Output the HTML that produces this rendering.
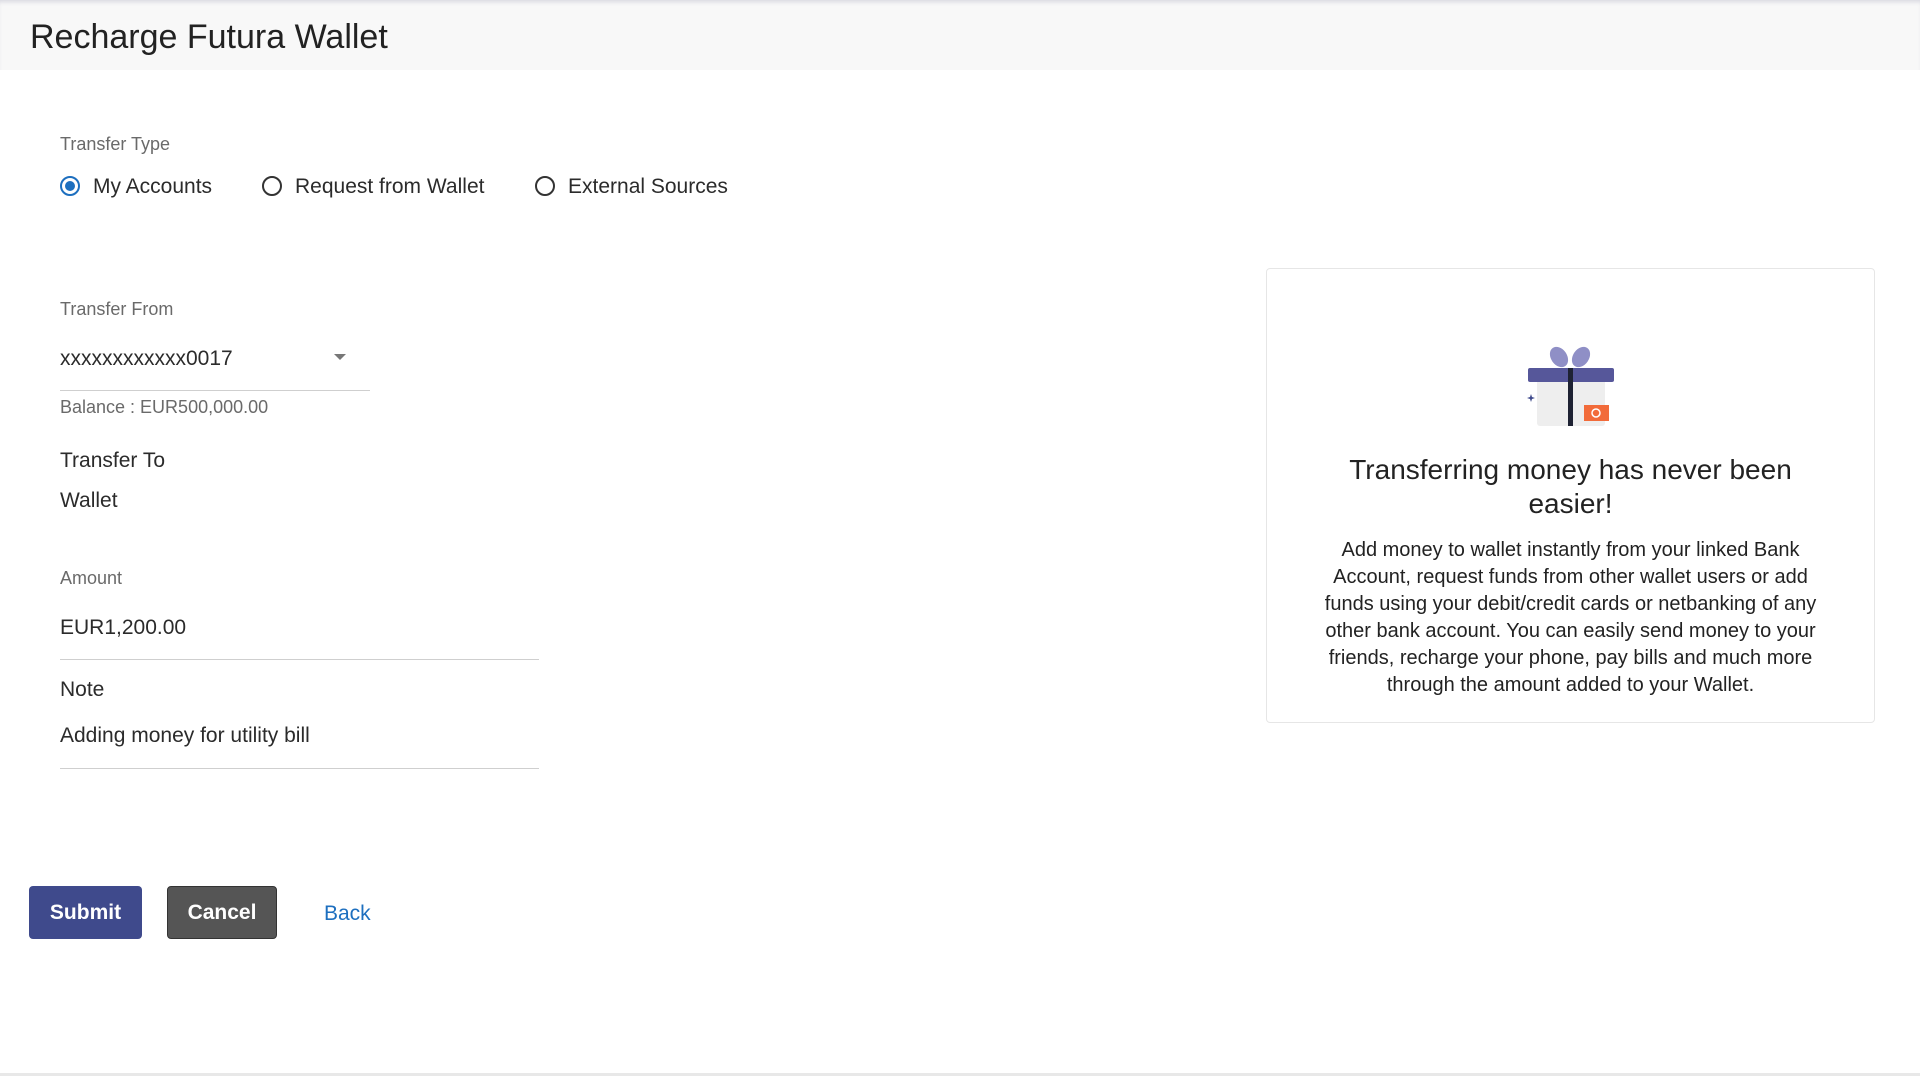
<!DOCTYPE html>
<html><head><style>
body{margin:0;width:1920px;height:1076px;background:#fff;font-family:"Liberation Sans",sans-serif;color:#2b2b2b;position:relative;overflow:hidden}
.a{position:absolute;white-space:nowrap}
.hdr{position:absolute;left:0;top:0;width:1920px;height:70px;background:#f8f8f8;box-shadow:inset 0 4px 4px -2px #d8d8e0}
.lbl{font-size:18px;color:#6a6a6a}
.val{font-size:21px;color:#2b2b2b}
.line{position:absolute;height:1px;background:#cfcfcf}
.rad{position:absolute;width:20px;height:20px;border:2px solid #333;border-radius:50%;box-sizing:border-box}
.btn{position:absolute;height:53px;border-radius:4px;color:#fff;font-size:21px;font-weight:bold;display:flex;align-items:center;justify-content:center}
</style></head><body>
<div class="hdr"></div>
<div class="a" style="left:30px;top:18px;font-size:34px;color:#222">Recharge Futura Wallet</div>
<div class="a lbl" style="left:60px;top:134px">Transfer Type</div>
<div class="rad" style="left:60px;top:176px;border-color:#1d6fbf"><div style="position:absolute;left:3px;top:3px;width:10px;height:10px;border-radius:50%;background:#1d6fbf"></div></div>
<div class="a val" style="left:93px;top:175px">My Accounts</div>
<div class="rad" style="left:262px;top:176px"></div>
<div class="a val" style="left:295px;top:175px">Request from Wallet</div>
<div class="rad" style="left:535px;top:176px"></div>
<div class="a val" style="left:568px;top:175px">External Sources</div>
<div class="a lbl" style="left:60px;top:299px">Transfer From</div>
<div class="a val" style="left:60px;top:347px">xxxxxxxxxxxx0017</div>
<div class="a" style="left:334px;top:354px;width:0;height:0;border-left:6px solid transparent;border-right:6px solid transparent;border-top:6px solid #777"></div>
<div class="line" style="left:60px;top:390px;width:310px"></div>
<div class="a lbl" style="left:60px;top:397px">Balance : EUR500,000.00</div>
<div class="a val" style="left:60px;top:449px">Transfer To</div>
<div class="a val" style="left:60px;top:489px">Wallet</div>
<div class="a lbl" style="left:60px;top:568px">Amount</div>
<div class="a val" style="left:60px;top:616px">EUR1,200.00</div>
<div class="line" style="left:60px;top:659px;width:479px"></div>
<div class="a val" style="left:60px;top:678px">Note</div>
<div class="a val" style="left:60px;top:724px">Adding money for utility bill</div>
<div class="line" style="left:60px;top:768px;width:479px"></div>
<div class="btn" style="left:29px;top:886px;width:113px;background:#3f4a8c">Submit</div>
<div class="btn" style="left:167px;top:886px;width:110px;background:#555;border:1px solid #333;box-sizing:border-box">Cancel</div>
<div class="a" style="left:324px;top:902px;font-size:21px;color:#1d6fbf">Back</div>
<div class="a" style="left:1266px;top:268px;width:607px;height:453px;border:1px solid #e6e6e6;border-radius:4px;white-space:normal">
<svg style="position:absolute;left:258px;top:74px" width="92" height="86" viewBox="0 0 92 86">
<ellipse cx="34" cy="14" rx="8" ry="11" fill="#8f8fc6" transform="rotate(-35 34 14)"/>
<ellipse cx="56" cy="14" rx="8" ry="11" fill="#8f8fc6" transform="rotate(35 56 14)"/>
<rect x="12" y="33" width="68" height="50" rx="3" fill="#eeeeee"/>
<rect x="3" y="25" width="86" height="14" rx="2" fill="#56579a"/>
<rect x="43" y="25" width="5" height="58" fill="#1e2233"/>
<rect x="59" y="62" width="25" height="16" fill="#f26b3a"/>
<circle cx="71" cy="70" r="4" fill="none" stroke="#fff" stroke-width="1.5"/>
<path d="M6 51l1 3 3 1-3 1-1 3-1-3-3-1 3-1z" fill="#3f4a8c"/>
</svg>
<div style="position:absolute;left:0;top:184px;width:607px;text-align:center;font-size:28px;line-height:34px;color:#222">Transferring money has never been<br>easier!</div>
<div style="position:absolute;left:40px;top:268px;width:527px;text-align:center;font-size:20px;line-height:27px;color:#222">Add money to wallet instantly from your linked Bank Account, request funds from other wallet users or add funds using your debit/credit cards or netbanking of any other bank account. You can easily send money to your friends, recharge your phone, pay bills and much more through the amount added to your Wallet.</div>
</div>
<div class="line" style="left:0;top:1073px;width:1920px;height:3px;background:#e8e8e8"></div>
</body></html>
